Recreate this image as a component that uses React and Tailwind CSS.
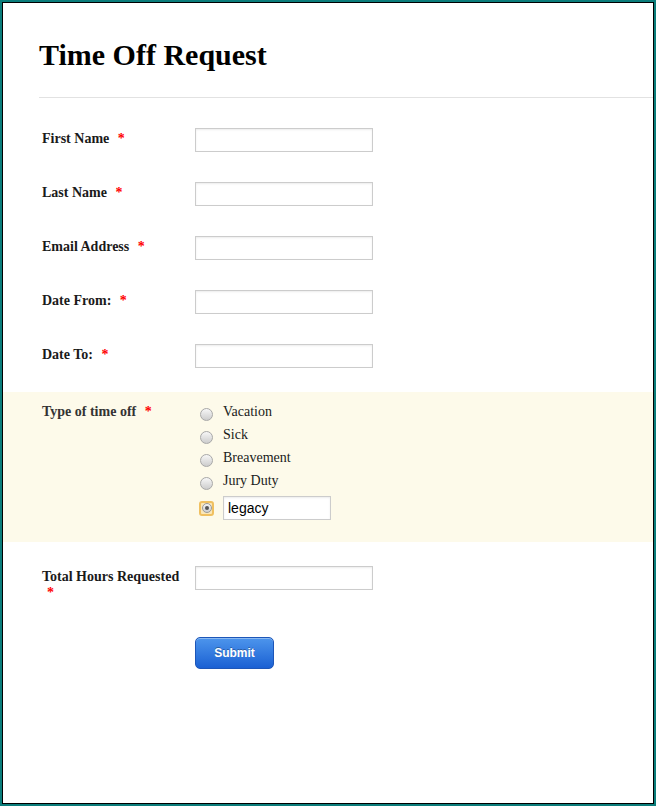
import { useState } from 'react';

const serif = { fontFamily: '"Liberation Serif", "Times New Roman", serif' };

const Required = () => (
  <>
    {' '}
    <span className="ml-[5px] text-[#ff0000] font-bold">*</span>
  </>
);

const TextInput = ({ className = '', ...props }) => (
  <input
    type="text"
    className={`h-[24px] border border-[#cccccc] bg-white px-[4px] text-[14px] text-black shadow-[inset_0_1px_2px_rgba(0,0,0,0.08)] outline-none ${className}`}
    style={{ fontFamily: '"Liberation Sans", Arial, sans-serif' }}
    {...props}
  />
);

const Radio = ({ checked }) =>
  checked ? (
    <span className="flex h-[15px] w-[15px] items-center justify-center rounded-[3px] border-2 border-[#f0c060] bg-[#fbe7b8]">
      <span className="flex h-[10px] w-[10px] items-center justify-center rounded-full border border-[#9a9a9a] bg-gradient-to-b from-[#f4f4f4] to-[#cfcfcf]">
        <span className="h-[4px] w-[4px] rounded-full bg-[#555]" />
      </span>
    </span>
  ) : (
    <span className="h-[13px] w-[13px] rounded-full border border-[#a8a8a8] bg-gradient-to-b from-[#f7f7f7] to-[#cdcdcd]" />
  );

const FieldRow = ({ label }) => (
  <div className="grid grid-cols-[148px_1fr] gap-x-[5px] py-[15px]">
    <label className="pt-[3px] text-[14px] font-bold leading-[16px] text-[#1a1a1a]">
      {label}
      <Required />
    </label>
    <TextInput className="w-[178px]" />
  </div>
);

export default function App() {
  const [choice, setChoice] = useState('other');
  const options = ['Vacation', 'Sick', 'Breavement', 'Jury Duty'];

  return (
    <div className="h-[806px] w-[656px] border-2 border-[#0b7d7b] bg-[#0b7d7b]">
      <div className="flex h-full flex-col border border-black bg-white" style={serif}>
        {/* Header */}
        <div className="ml-[36px] border-b border-[#e2e2e2] pb-[25px] pt-[35px]">
          <h1 className="text-[30px] font-bold leading-[34px] text-black">Time Off Request</h1>
        </div>

        {/* Fields */}
        <div className="mt-[15px] px-[39px]">
          <FieldRow label="First Name" />
          <FieldRow label="Last Name" />
          <FieldRow label="Email Address" />
          <FieldRow label="Date From:" />
          <FieldRow label="Date To:" />
        </div>

        {/* Type of time off */}
        <div className="mt-[9px] bg-[#fdfaea] px-[39px] pb-[22px] pt-[8px]">
          <div className="grid grid-cols-[148px_1fr] gap-x-[5px]">
            <label className="pt-[4px] text-[14px] font-bold leading-[16px] text-[#333333]">
              Type of time off
              <Required />
            </label>
            <div className="flex flex-col">
              {options.map((opt) => (
                <div
                  key={opt}
                  className="flex h-[23px] cursor-pointer items-start"
                  onClick={() => setChoice(opt)}
                >
                  <span className="ml-[5px] mt-[8px] flex w-[23px]">
                    <Radio checked={choice === opt} />
                  </span>
                  <span className="text-[14px] leading-[23px] text-[#1a1a1a]">{opt}</span>
                </div>
              ))}
              <div className="mt-[4px] flex items-center">
                <span className="ml-[4px] flex w-[24px]" onClick={() => setChoice('other')}>
                  <Radio checked={choice === 'other'} />
                </span>
                <TextInput className="w-[108px]" defaultValue="legacy" />
              </div>
            </div>
          </div>
        </div>

        {/* Total hours */}
        <div className="mt-[24px] px-[39px]">
          <div className="grid grid-cols-[148px_1fr] gap-x-[5px]">
            <label className="pt-[3px] text-[14px] font-bold leading-[16px] text-[#1a1a1a]">
              Total Hours Requested
              <Required />
            </label>
            <TextInput className="w-[178px]" />
          </div>

          <div className="mt-[36px] pl-[153px]">
            <button
              type="button"
              className="h-[32px] w-[79px] rounded-[5px] border border-[#1d56b8] bg-gradient-to-b from-[#4d95ec] to-[#1a60d3] text-[12px] font-bold text-white shadow-[inset_0_1px_0_rgba(255,255,255,0.35)] [text-shadow:0_-1px_0_rgba(0,0,0,0.3)]"
              style={{ fontFamily: '"Liberation Sans", Arial, sans-serif' }}
            >
              Submit
            </button>
          </div>
        </div>
      </div>
    </div>
  );
}
